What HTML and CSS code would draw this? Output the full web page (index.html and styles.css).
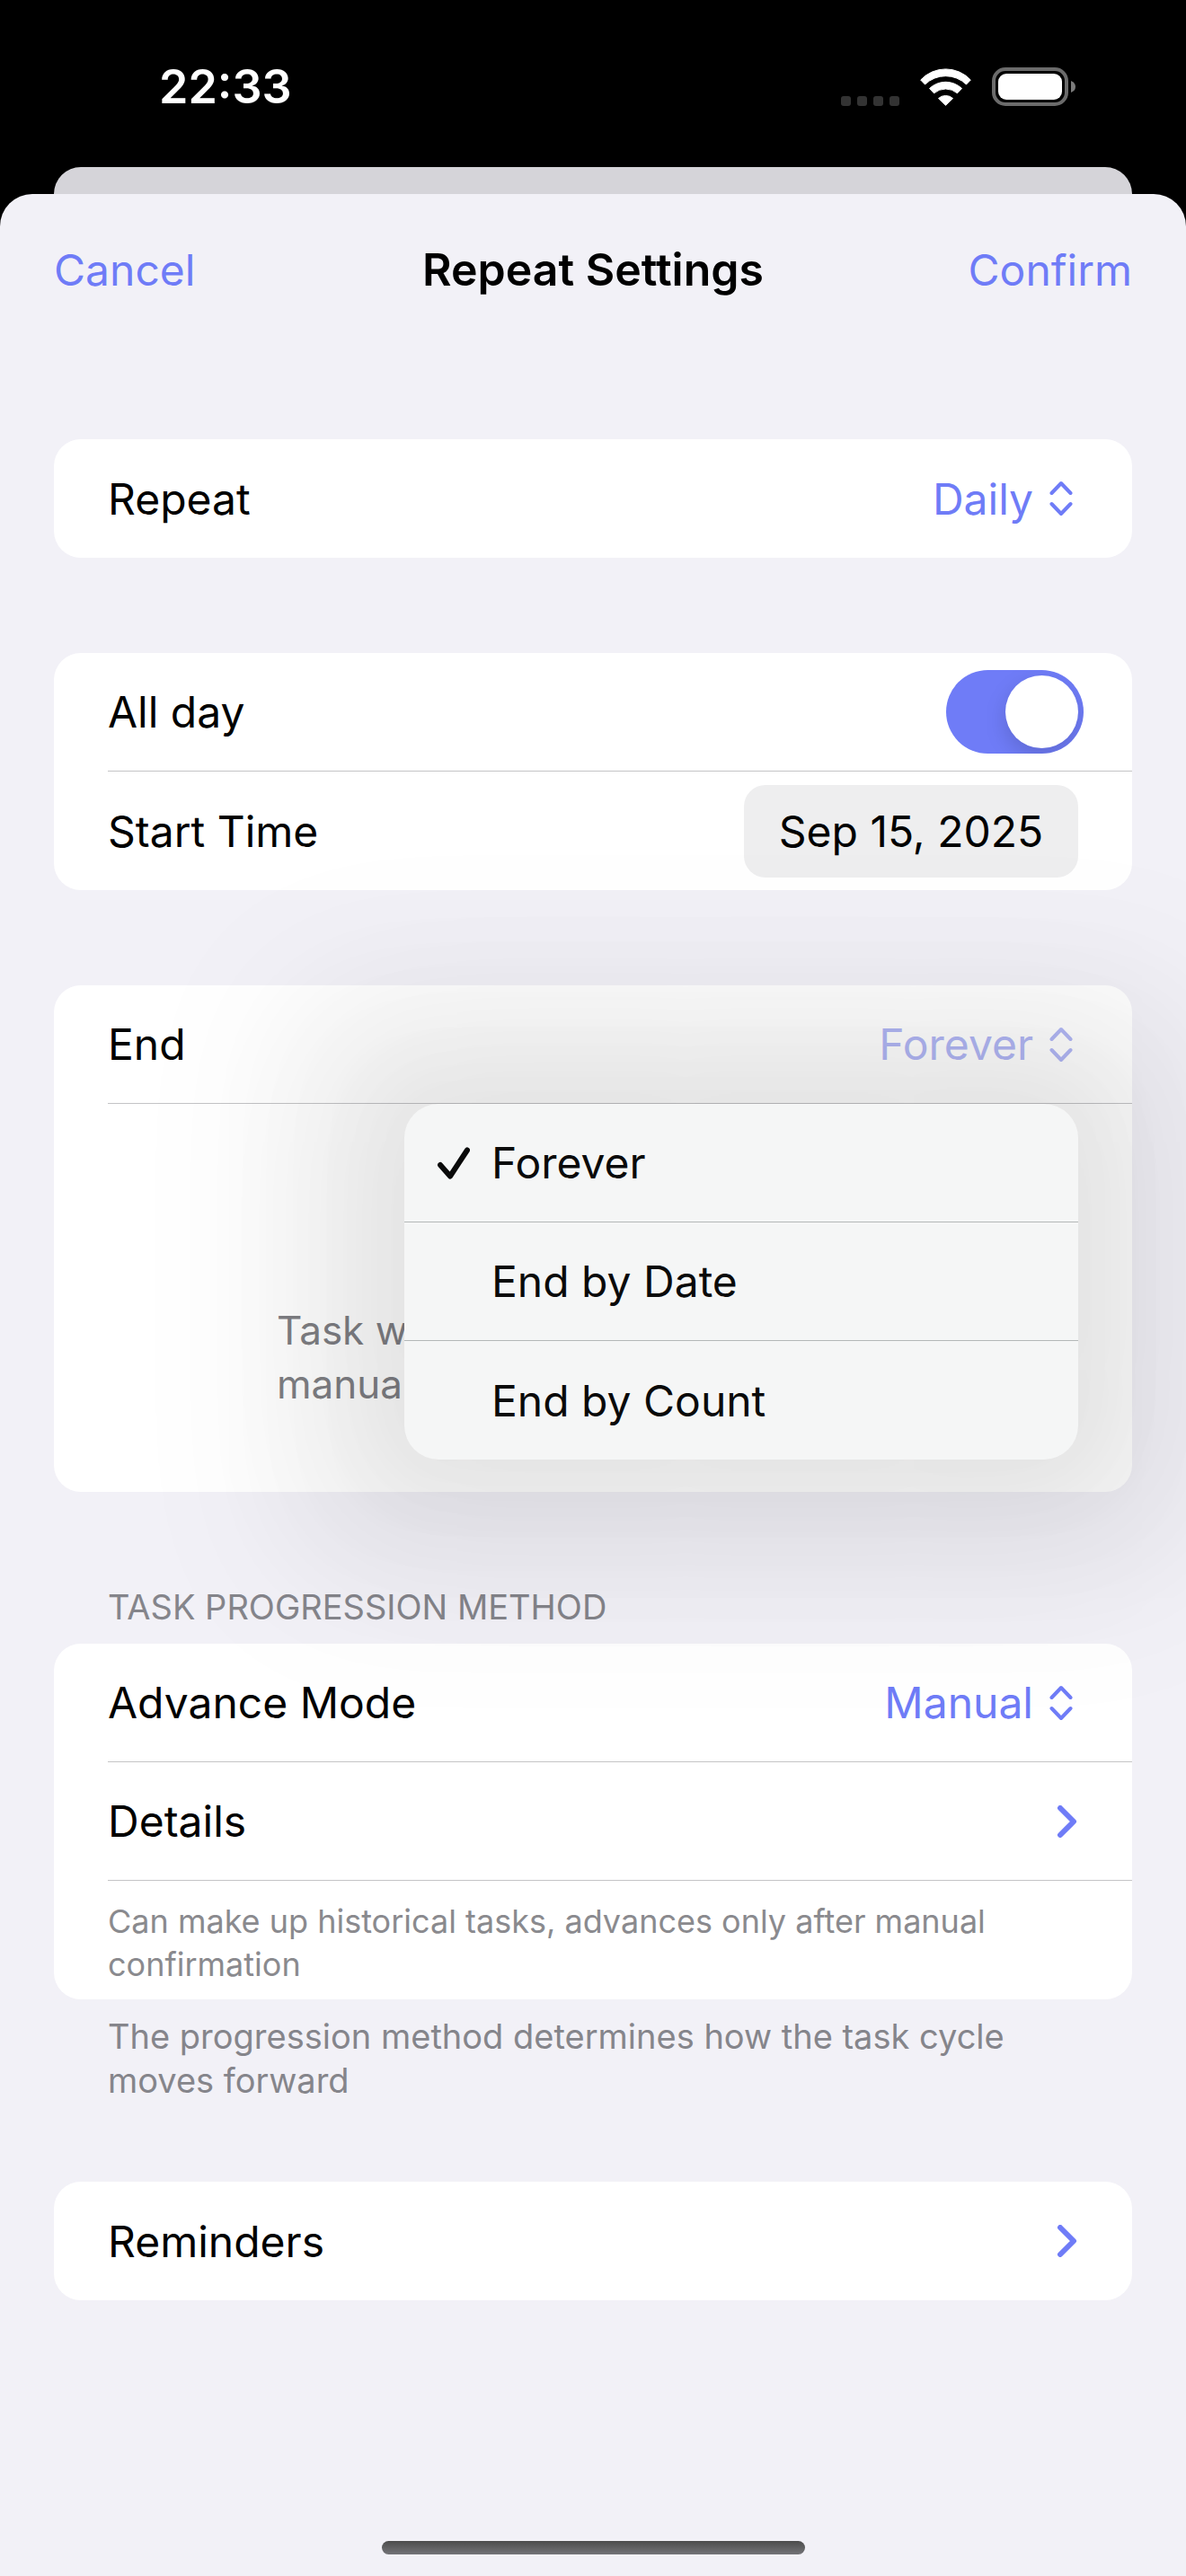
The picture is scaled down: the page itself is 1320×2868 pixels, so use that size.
FILE: index.html
```
<!DOCTYPE html>
<html lang="en">
<head>
    <meta charset="UTF-8">
    <meta name="viewport" content="width=device-width, initial-scale=1.0">
    <title>Repeat Settings</title>
    <link rel="stylesheet" href="styles.css">
</head>
<body>
    <header class="status-bar">
        <time class="clock">22:33</time>
        <div class="status-icons">
            <svg class="signal" width="65" height="11" viewBox="0 0 65 11">
                <rect x="0" width="11" height="11" rx="3"/>
                <rect x="18" width="11" height="11" rx="3"/>
                <rect x="36" width="11" height="11" rx="3"/>
                <rect x="54" width="11" height="11" rx="3"/>
            </svg>
            <svg class="wifi" width="57" height="42" viewBox="0 0 57 42">
                <path d="M0.7 13A38 38 0 0 1 56.3 13L51.5 18A33 33 0 0 0 5.5 18Z"/>
                <path d="M10.5 22.5A26 26 0 0 1 46.500 22.500L41.500 27.800A20 20 0 0 0 15.500 27.800Z"/>
                <path d="M20.500 33.500A12 12 0 0 1 36.500 33.500L28.500 41.300Z"/>
            </svg>
            <svg class="battery" width="94" height="43" viewBox="0 0 94 43">
                <rect x="2" y="2" width="81" height="39" rx="13" fill="none" stroke="#6b6b6b" stroke-width="4"/>
                <rect x="7" y="7" width="71" height="29" rx="9" fill="#fff"/>
                <path d="M88 15Q93 17 93 21.500Q93 26 88 28Z" fill="#7b7b7b"/>
            </svg>
        </div>
    </header>

    <div class="back-sheet"></div>

    <main class="sheet">
        <nav class="nav-bar">
            <button type="button" class="nav-button">Cancel</button>
            <h1>Repeat Settings</h1>
            <button type="button" class="nav-button nav-confirm">Confirm</button>
        </nav>

        <form class="groups">
            <section class="group">
                <div class="card">
                    <div class="row">
                        <label for="repeat">Repeat</label>
                        <div class="picker">
                            <select id="repeat">
                                <option selected>Daily</option>
                                <option>Weekly</option>
                            </select>
                            <svg width="32" height="40" viewBox="0 0 32 40"><path d="M2.500 14L13 3L23.500 14M2.500 26L13 37L23.500 26"/></svg>
                        </div>
                    </div>
                </div>
            </section>

            <section class="group">
                <div class="card">
                    <div class="row row-toggle">
                        <label for="allDay">All day</label>
                        <input type="checkbox" id="allDay" class="toggle" checked>
                    </div>
                    <div class="row">
                        <label for="startTime">Start Time</label>
                        <input type="text" id="startTime" class="date" value="Sep 15, 2025">
                    </div>
                </div>
            </section>

            <section class="group">
                <div class="card">
                    <div class="row row-end">
                        <label for="end">End</label>
                        <div class="picker picker-open">
                            <select id="end">
                                <option selected>Forever</option>
                                <option>End by Date</option>
                                <option>End by Count</option>
                            </select>
                            <svg width="32" height="40" viewBox="0 0 32 40"><path d="M2.500 14L13 3L23.500 14M2.500 26L13 37L23.500 26"/></svg>
                        </div>
                        <div class="menu" role="menu">
                            <button type="button" class="menu-item" role="menuitemradio" aria-checked="true">
                                <svg width="36" height="36" viewBox="0 0 36 36"><path d="M3 20L14 32.500L33 3.500"/></svg>
                                Forever
                            </button>
                            <button type="button" class="menu-item" role="menuitemradio" aria-checked="false">End by Date</button>
                            <button type="button" class="menu-item" role="menuitemradio" aria-checked="false">End by Count</button>
                        </div>
                    </div>
                    <div class="end-info">
                        <p>Task will repeat until it is<br>manually stopped</p>
                    </div>
                </div>
            </section>

            <section class="group">
                <h2>TASK PROGRESSION METHOD</h2>
                <div class="card">
                    <div class="row">
                        <label for="mode">Advance Mode</label>
                        <div class="picker">
                            <select id="mode">
                                <option selected>Manual</option>
                                <option>Auto</option>
                            </select>
                            <svg width="32" height="40" viewBox="0 0 32 40"><path d="M2.500 14L13 3L23.500 14M2.500 26L13 37L23.500 26"/></svg>
                        </div>
                    </div>
                    <a href="#details" class="row">
                        Details
                        <svg class="chevron" width="24" height="36" viewBox="0 0 24 36"><path d="M4 3L19 18L4 33"/></svg>
                    </a>
                    <p class="caption">Can make up historical tasks, advances only after manual confirmation</p>
                </div>
                <p class="footnote">The progression method determines how the task cycle moves forward</p>
            </section>

            <section class="group group-last">
                <div class="card">
                    <a href="#reminders" class="row">
                        Reminders
                        <svg class="chevron" width="24" height="36" viewBox="0 0 24 36"><path d="M4 3L19 18L4 33"/></svg>
                    </a>
                </div>
            </section>
        </form>

        <div class="home-indicator"></div>
    </main>
</body>
</html>
```

FILE: styles.css
```
* {
    box-sizing: border-box;
}
body {
    margin: 0;
    min-height: 100vh;
    display: flex;
    flex-direction: column;
    overflow-x: hidden;
    background-color: #000;
    color: #000;
    font-family: Inter, "Liberation Sans", sans-serif;
    font-size: 48px;
}
h1, h2, p {
    margin: 0;
}
button, input, select {
    margin: 0;
    padding: 0;
    border: none;
    background: none;
    color: inherit;
    font: inherit;
}

/* status bar */
.status-bar {
    display: flex;
    justify-content: space-between;
    height: 186px;
    padding: 75px 122px 0 177px;
    color: #fff;
}
.clock {
    font-size: 52px;
    font-weight: 600;
    line-height: 44px;
}
.status-icons {
    display: flex;
    align-items: flex-end;
    gap: 23px;
    height: 43px;
}
.signal {
    fill: #333;
}
.wifi {
    fill: #fff;
    stroke: #fff;
    stroke-width: 1;
    stroke-linejoin: round;
}

/* sheets */
.back-sheet {
    height: 30px;
    margin: 0 60px;
    border-radius: 30px 30px 0 0;
    background-color: #d5d4d9;
}
.sheet {
    flex: 1;
    display: flex;
    flex-direction: column;
    border-radius: 36px 36px 0 0;
    background-color: #f2f1f7;
}
.nav-bar {
    display: grid;
    grid-template-columns: 1fr auto 1fr;
    align-items: center;
    height: 168px;
    padding: 0 60px;
}
.nav-bar h1 {
    font-size: 50px;
    font-weight: 600;
}
.nav-button {
    color: #6f7cf7;
    text-align: left;
}
.nav-confirm {
    text-align: right;
}

/* grouped list */
.groups {
    padding: 105px 60px 0;
}
.group + .group {
    margin-top: 106px;
}
.group + .group-last {
    margin-top: 88px;
}
.group h2 {
    margin: 0 60px 19px;
    color: #85858b;
    font-size: 38px;
    font-weight: 400;
    line-height: 44px;
}
.card {
    padding-left: 60px;
    border-radius: 30px;
    background-color: #fff;
}
.row {
    display: flex;
    align-items: center;
    justify-content: space-between;
    height: 132px;
    padding-right: 60px;
    border-bottom: 1px solid #c4c4c6;
    color: inherit;
    text-decoration: none;
}
.row:last-child {
    border-bottom: none;
}
.row-toggle {
    padding-right: 54px;
}
.row-end {
    position: relative;
}
.picker {
    display: flex;
    align-items: center;
    gap: 18px;
    color: #6f7cf7;
}
.picker-open {
    color: #b2b8f5;
}
.picker select {
    appearance: none;
    field-sizing: content;
    text-align-last: right;
}
.picker svg, .chevron {
    fill: none;
    stroke: currentColor;
    stroke-width: 4;
    stroke-linecap: round;
    stroke-linejoin: round;
}
.chevron {
    color: #6f7cf7;
    stroke-width: 6;
}
.toggle {
    appearance: none;
    width: 153px;
    height: 93px;
    padding: 6px;
    border-radius: 47px;
    background-color: #e9e9ea;
    overflow: hidden;
}
.toggle::before {
    content: "";
    display: block;
    width: 81px;
    height: 81px;
    border-radius: 50%;
    background-color: #fff;
    box-shadow: 0 9px 24px rgba(0, 0, 0, 0.15);
}
.toggle:checked {
    background-color: #6f7cf7;
}
.toggle:checked::before {
    margin-left: auto;
}
.date {
    width: 372px;
    height: 103px;
    border-radius: 24px;
    background-color: #eeeeef;
    text-align: center;
}

/* open drop-down */
.menu {
    position: absolute;
    z-index: 1;
    top: 132px;
    right: 60px;
    width: 750px;
    border-radius: 38px;
    background-color: #f5f6f6;
    box-shadow:
        0 0 100px 30px rgba(0, 0, 0, 0.03),
        0 0 150px 100px rgba(0, 0, 0, 0.06),
        0 0 170px 180px rgba(0, 0, 0, 0.03);
}
.menu-item {
    display: flex;
    align-items: center;
    gap: 24px;
    width: 100%;
    height: 132px;
    padding-left: 97px;
    border-bottom: 1px solid #b4b8b8;
    color: #0a0a0a;
}
.menu-item:last-child {
    border-bottom: none;
}
.menu-item[aria-checked="true"] {
    padding-left: 37px;
}
.menu-item svg {
    fill: none;
    stroke: #0a0a0a;
    stroke-width: 6;
    stroke-linecap: round;
    stroke-linejoin: round;
}
.end-info {
    display: flex;
    align-items: flex-end;
    height: 432px;
    padding: 0 60px 90px 188px;
    color: #7f7f84;
    font-size: 44px;
    line-height: 60px;
}
.caption {
    padding: 21px 60px 15px 0;
    color: #8a8a8e;
    font-size: 36px;
    line-height: 48px;
}
.footnote {
    margin: 17px 60px 0;
    color: #85858b;
    font-size: 38px;
    line-height: 49px;
}

.home-indicator {
    width: 471px;
    height: 15px;
    margin: auto auto 24px;
    border-radius: 8px;
    background: linear-gradient(#4c4c4c, #747478);
}
```
